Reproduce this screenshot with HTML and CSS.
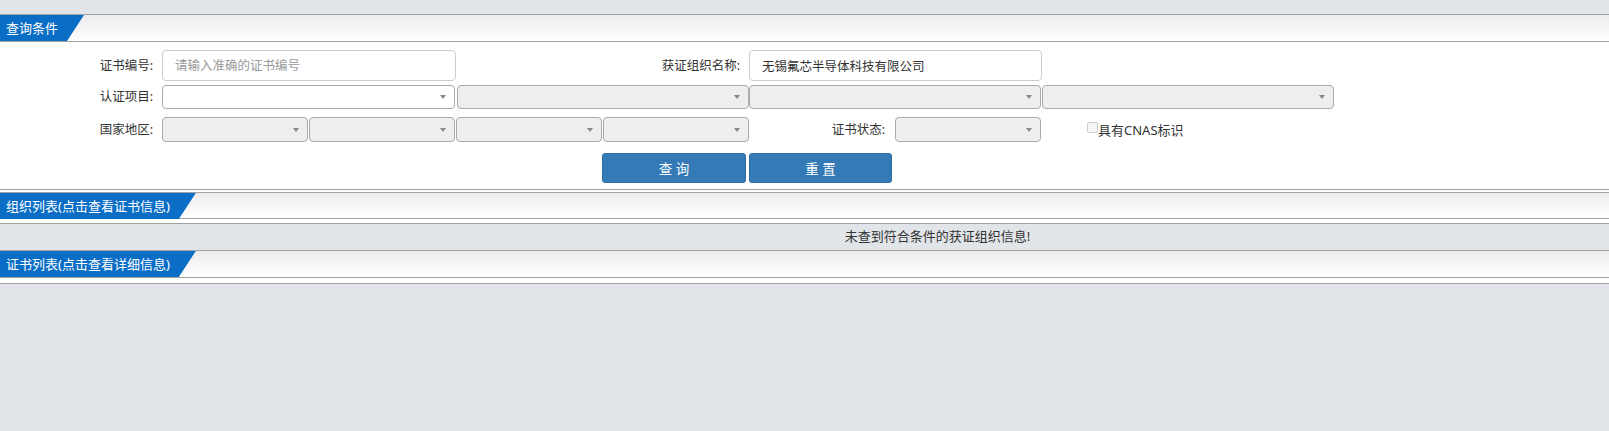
FILE: index.html
```html
<!DOCTYPE html>
<html lang="zh-CN">
<head>
    <meta charset="UTF-8">
    <title>认证结果查询</title>
    <link rel="stylesheet" href="styles.css">
</head>
<body>
    <div class="top-gap"></div>

    <!-- 查询条件 -->
    <div class="panel">
        <div class="panel-head"><span class="panel-tab">查询条件</span></div>
        <div class="query-form">
            <div class="form-row row-1">
                <label class="form-label">证书编号:</label>
                <input type="text" class="form-input input-cert" placeholder="请输入准确的证书编号">
                <label class="form-label">获证组织名称:</label>
                <input type="text" class="form-input input-org" value="无锡氟芯半导体科技有限公司">
            </div>

            <div class="form-row row-2">
                <label class="form-label">认证项目:</label>
                <div class="combo combo-open"></div>
                <div class="combo combo-mid"></div>
                <div class="combo combo-mid"></div>
                <div class="combo combo-mid"></div>
            </div>

            <div class="form-row row-3">
                <label class="form-label">国家地区:</label>
                <div class="combo-pair">
                    <div class="combo combo-half"></div>
                    <div class="combo combo-half"></div>
                </div>
                <div class="combo-pair shift">
                    <div class="combo combo-half"></div>
                    <div class="combo combo-half"></div>
                </div>
                <div class="status-cell">
                    <label class="form-label">证书状态:</label>
                    <div class="combo combo-half"></div>
                </div>
                <div class="check-cell">
                    <span class="checkbox"></span><span class="check-text">具有CNAS标识</span>
                </div>
            </div>

            <div class="form-row row-btns">
                <span></span>
                <span></span>
                <button class="btn btn-query">查 询</button>
                <button class="btn btn-reset">重 置</button>
            </div>
        </div>
    </div>

    <!-- 组织列表 -->
    <div class="panel panel-next">
        <div class="panel-head"><span class="panel-tab">组织列表(点击查看证书信息)</span></div>
        <div class="panel-body"></div>
    </div>
    <div class="empty-msg">未查到符合条件的获证组织信息!</div>

    <!-- 证书列表 -->
    <div class="panel">
        <div class="panel-head"><span class="panel-tab">证书列表(点击查看详细信息)</span></div>
        <div class="panel-body body-last"></div>
    </div>
</body>
</html>
```

FILE: styles.css
```css
/* Base */
* {
    margin: 0;
    padding: 0;
    box-sizing: border-box;
}

body {
    background-color: #e1e5e9;
    font-family: "Noto Sans", "Noto Sans CJK SC", sans-serif;
    font-size: 12.5px;
    color: #333;
    min-height: 100vh;
}

.top-gap {
    height: 14px;
}

/* Panels */
.panel {
    background: white;
    border-top: 1px solid #a3a3a3;
    border-bottom: 1px solid #a3a3a3;
}

.panel-next {
    border-top: none;
    padding-top: 2px;
}

.panel-next .panel-head {
    border-top: 1px solid #a3a3a3;
}

.panel-head {
    height: 27px;
    background: linear-gradient(to bottom, #ececec, #ffffff);
    border-bottom: 1px solid #a3a3a3;
}

.panel-tab {
    display: inline-block;
    height: 26px;
    line-height: 26px;
    padding: 0 26px 0 6px;
    background: #0a6dc6;
    color: white;
    font-size: 13px;
    clip-path: polygon(0 0, 100% 0, calc(100% - 17px) 100%, 0 100%);
}

.panel-body {
    height: 4px;
}

.body-last {
    height: 5px;
}

/* Query form */
.query-form {
    padding: 8px 0 6px;
}

.form-row {
    display: grid;
    grid-template-columns: 162px 295px 292px 293px 293px;
    align-items: center;
}

.row-1 {
    height: 31px;
    margin-bottom: 4px;
}

.row-2 {
    height: 24px;
    margin-bottom: 8px;
}

.row-3 {
    height: 25px;
    margin-bottom: 11px;
}

.row-btns {
    height: 30px;
}

.form-label {
    text-align: right;
    padding-right: 9px;
    line-height: 20px;
    white-space: nowrap;
}

.form-input {
    height: 31px;
    border: 1px solid #cccccc;
    border-radius: 4px;
    padding: 0 12px;
    font-family: inherit;
    font-size: 12.5px;
    color: #333;
    background: white;
}

.form-input::placeholder {
    color: #999;
}

.input-cert {
    width: 294px;
}

.input-org {
    width: 293px;
}

/* Combo boxes */
.combo {
    position: relative;
    height: 24px;
    border: 1px solid #aaaaaa;
    border-radius: 4px;
    background: #eeeeee;
}

.combo::after {
    content: "";
    position: absolute;
    right: 8px;
    top: 50%;
    margin-top: -2px;
    border-left: 3px solid transparent;
    border-right: 3px solid transparent;
    border-top: 4px solid #888;
}

.combo-open {
    width: 293px;
    background: white;
}

.combo-mid {
    width: 292px;
}

.combo-pair {
    display: flex;
    gap: 1px;
}

.combo-pair.shift {
    margin-left: -1px;
}

.combo-half {
    width: 146px;
    height: 25px;
}

.status-cell {
    display: flex;
    justify-content: flex-end;
    align-items: center;
    padding-right: 1px;
}

.status-cell .form-label {
    padding-right: 10px;
}

.check-cell {
    display: flex;
    align-items: center;
    padding-left: 45px;
}

.checkbox {
    width: 11px;
    height: 11px;
    border: 1px solid #cfcfcf;
    border-radius: 2px;
    background: #f6f6f6;
    margin-top: -4px;
}

.check-text {
    line-height: 20px;
    font-size: 13px;
}

/* Buttons */
.btn {
    height: 30px;
    border: 1px solid #2e6da4;
    border-radius: 3px;
    background-color: #337ab7;
    color: white;
    font-family: inherit;
    font-size: 13.5px;
    cursor: pointer;
}

.btn-query {
    width: 144px;
    justify-self: end;
    margin-right: 3px;
}

.btn-reset {
    width: 143px;
}

/* Empty list message */
.empty-msg {
    height: 26px;
    line-height: 25px;
    padding-left: 266px;
    text-align: center;
    font-size: 13px;
    color: #333;
}
```
